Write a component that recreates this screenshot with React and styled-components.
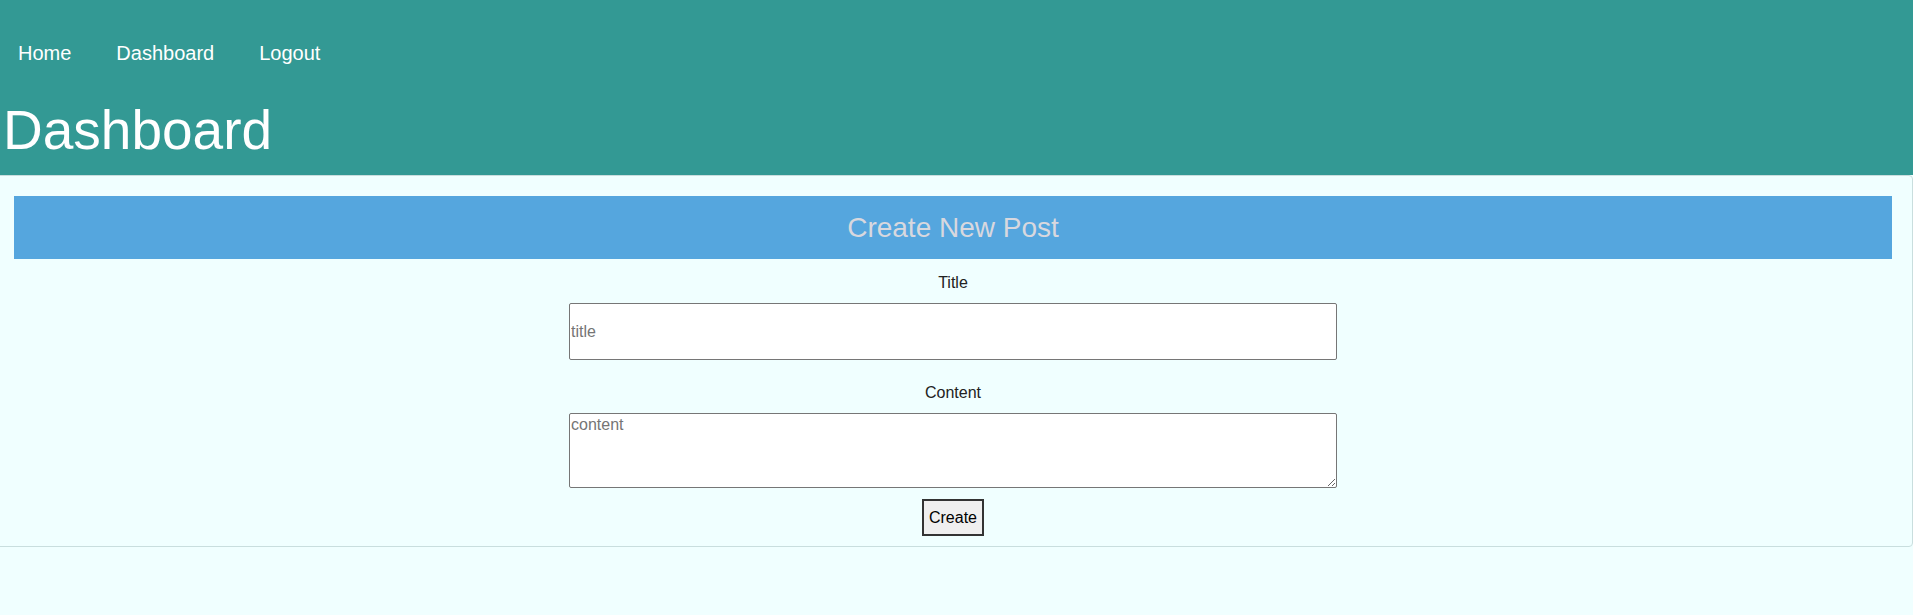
import React, { useState } from 'react';
import styled, { createGlobalStyle } from 'styled-components';

const GlobalStyle = createGlobalStyle`
    html, body {
        margin: 0;
        padding: 0;
        background-color: #f0ffff;
        font-family: "Liberation Sans", Arial, sans-serif;
        overflow-x: hidden;
    }
`;

// Teal top area with nav and page title
const Header = styled.header`
    background-color: #339994;
    color: #ffffff;
    padding: 42px 0 13px;
`;

const Nav = styled.nav`
    display: flex;
    gap: 45px;
    padding-left: 18px;
    margin-bottom: 33px;
`;

const NavLink = styled.a`
    color: #ffffff;
    font-size: 20px;
    line-height: 23px;
    text-decoration: none;

    &:hover {
        text-decoration: underline;
    }
`;

const PageTitle = styled.h1`
    margin: 0;
    padding-left: 3px;
    font-size: 55px;
    font-weight: normal;
    line-height: 64px;
`;

const Card = styled.section`
    box-sizing: border-box;
    margin: 0 0 0 -7px;
    padding: 20px 20px 10px;
    border: 1px solid #c9dede;
    border-radius: 4px;
`;

const CardTitle = styled.h2`
    margin: 0;
    height: 63px;
    display: flex;
    align-items: center;
    justify-content: center;
    background-color: #55a6de;
    color: #d8d8de;
    font-size: 28px;
    font-weight: normal;
`;

const Form = styled.form`
    display: flex;
    flex-direction: column;
    align-items: center;
`;

const Label = styled.label`
    display: block;
    margin-top: ${(p) => p.$gap}px;
    font-size: 16px;
    line-height: 18px;
    color: #222222;
`;

const fieldStyles = `
    box-sizing: border-box;
    width: 768px;
    margin-top: 11px;
    border: 1px solid #767676;
    border-radius: 2px;
    background: #ffffff;
    font-family: "Liberation Sans", Arial, sans-serif;
    font-size: 16px;
    color: #000000;

    &::placeholder {
        color: #757575;
    }
`;

const Input = styled.input`
    ${fieldStyles}
    height: 57px;
    padding: 1px 1px;
`;

const TextArea = styled.textarea`
    ${fieldStyles}
    display: block;
    height: 75px;
    padding: 2px 1px;
`;

const Button = styled.button`
    margin-top: 11px;
    height: 37px;
    padding: 0 5px;
    border: 2px solid #333333;
    background-color: #efefef;
    color: #000000;
    font-family: "Liberation Sans", Arial, sans-serif;
    font-size: 16px;
    cursor: pointer;

    &:hover {
        background-color: #e5e5e5;
    }
`;

const App = () => {
    const [title, setTitle] = useState('');
    const [content, setContent] = useState('');

    const handleSubmit = (e) => {
        e.preventDefault();
        setTitle('');
        setContent('');
    };

    return (
        <>
            <GlobalStyle />
            <Header>
                <Nav>
                    <NavLink href="#">Home</NavLink>
                    <NavLink href="#">Dashboard</NavLink>
                    <NavLink href="#">Logout</NavLink>
                </Nav>
                <PageTitle>Dashboard</PageTitle>
            </Header>
            <Card>
                <CardTitle>Create New Post</CardTitle>
                <Form onSubmit={handleSubmit}>
                    <Label htmlFor="title" $gap={15}>Title</Label>
                    <Input
                        id="title"
                        type="text"
                        placeholder="title"
                        value={title}
                        onChange={(e) => setTitle(e.target.value)}
                    />
                    <Label htmlFor="content" $gap={24}>Content</Label>
                    <TextArea
                        id="content"
                        placeholder="content"
                        value={content}
                        onChange={(e) => setContent(e.target.value)}
                    />
                    <Button type="submit">Create</Button>
                </Form>
            </Card>
        </>
    );
};

export default App;
